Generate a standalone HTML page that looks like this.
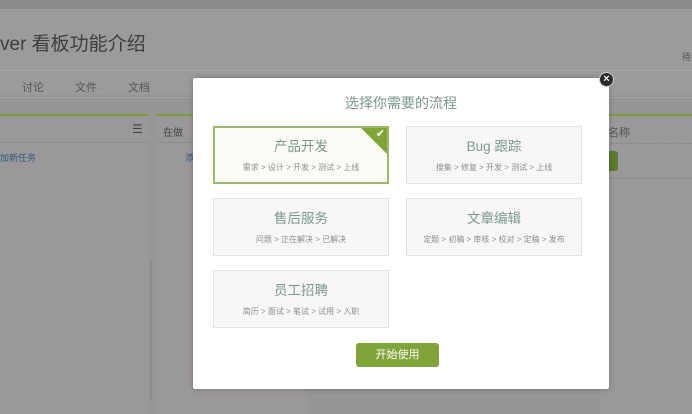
<!DOCTYPE html>
<html><head><meta charset="utf-8"><style>
*{margin:0;padding:0;box-sizing:border-box}
body{width:692px;height:400px;overflow:hidden;background:#979597;font-family:"Liberation Sans","Noto Sans CJK SC",sans-serif;position:relative}
.abs{position:absolute}
.col{position:absolute;top:114px;height:300px;background:#9b989b;border-top:2px solid #79a030}
.card{position:absolute;width:176px;height:58px;border:1px solid #e2e2e2;background:#f7f7f8;text-align:center}
.card .t{font-size:13.5px;color:#7c9a8c;margin-top:12px;line-height:16px}
.card .s{font-size:8px;color:#8d8d8d;margin-top:8px;line-height:10px}
</style></head><body>
<div class="abs" style="left:0;top:0;width:692px;height:9px;background:#8a8a8a"></div>
<div class="abs" style="left:0;top:9px;width:692px;height:86px;background:#9c9a9c"></div>
<div class="abs" style="left:0;top:70px;width:692px;height:1px;background:#a6a4a6"></div>
<div class="abs" style="left:0;top:97px;width:692px;height:1px;background:#a3a1a3"></div>
<div class="abs" style="left:0;top:29px;font-size:19px;color:#3e3e3e">ver 看板功能介绍</div>
<div class="abs" style="left:682px;top:50px;font-size:9px;color:#555">待</div>
<div class="abs" style="left:22px;top:79px;font-size:11px;color:#555">讨论</div>
<div class="abs" style="left:75px;top:79px;font-size:11px;color:#555">文件</div>
<div class="abs" style="left:128px;top:79px;font-size:11px;color:#555">文档</div>
<div class="col" style="left:0;width:149px"></div>
<div class="abs" style="left:0;top:142px;width:149px;height:1px;background:#8e8c8e"></div>
<div class="abs" style="left:132px;top:122px;font-size:12px;color:#444">☰</div>
<div class="abs" style="left:0;top:151px;font-size:9px;color:#2f5d7a">加新任务</div>
<div class="col" style="left:157px;width:150px"></div>
<div class="abs" style="left:157px;top:142px;width:150px;height:1px;background:#8e8c8e"></div>
<div class="abs" style="left:163px;top:124px;font-size:10px;color:#444">在做</div>
<div class="abs" style="left:185px;top:151px;font-size:9px;color:#2f5d7a">添</div>
<div class="col" style="left:600px;width:92px"></div>
<div class="abs" style="left:608px;top:124px;font-size:11px;color:#555">名称</div>
<div class="abs" style="left:600px;top:143px;width:92px;border-top:1px dashed #888"></div>
<div class="abs" style="left:600px;top:151px;width:18px;height:20px;background:#5b7a2a;border-radius:0 3px 3px 0"></div>
<div class="abs" style="left:600px;top:178px;width:92px;height:1px;background:#8e8c8e"></div>
<div class="abs" style="left:150px;top:260px;width:2px;height:140px;background:#8e8c8e"></div>
<div class="abs" style="left:193px;top:78px;width:416px;height:311px;background:#fff;border-radius:2px;box-shadow:0 0 6px rgba(0,0,0,.25)"></div>
<div class="abs" style="left:193px;top:93px;width:416px;text-align:center;font-size:14px;color:#7b988b">选择你需要的流程</div>
<div class="card" style="left:213px;top:126px;border:2px solid #9db866;background:#fbfcf6;overflow:hidden">
<div class="abs" style="right:0;top:0;width:0;height:0;border-top:26px solid #7fa636;border-left:26px solid transparent"></div>
<div class="abs" style="right:2px;top:-1px;color:#fff;font-size:11px">✔</div>
<div class="t" style="margin-top:11px">产品开发</div><div class="s">需求 &gt; 设计 &gt; 开发 &gt; 测试 &gt; 上线</div></div>
<div class="card" style="left:406px;top:126px"><div class="t">Bug 跟踪</div><div class="s">搜集 &gt; 修复 &gt; 开发 &gt; 测试 &gt; 上线</div></div>
<div class="card" style="left:213px;top:198px"><div class="t">售后服务</div><div class="s">问题 &gt; 正在解决 &gt; 已解决</div></div>
<div class="card" style="left:406px;top:198px"><div class="t">文章编辑</div><div class="s">定题 &gt; 初稿 &gt; 审核 &gt; 校对 &gt; 定稿 &gt; 发布</div></div>
<div class="card" style="left:213px;top:270px"><div class="t">员工招聘</div><div class="s">简历 &gt; 面试 &gt; 笔试 &gt; 试用 &gt; 入职</div></div>
<div class="abs" style="left:356px;top:343px;width:83px;height:24px;background:#7fa538;border-radius:3px;color:#fff;font-size:11px;text-align:center;line-height:24px">开始使用</div>
<div class="abs" style="left:599px;top:72px;width:15px;height:15px;border-radius:50%;background:#2a2a2a;border:1px solid #ccc;color:#fff;font-size:11px;font-weight:bold;text-align:center;line-height:13px">×</div>
</body></html>
